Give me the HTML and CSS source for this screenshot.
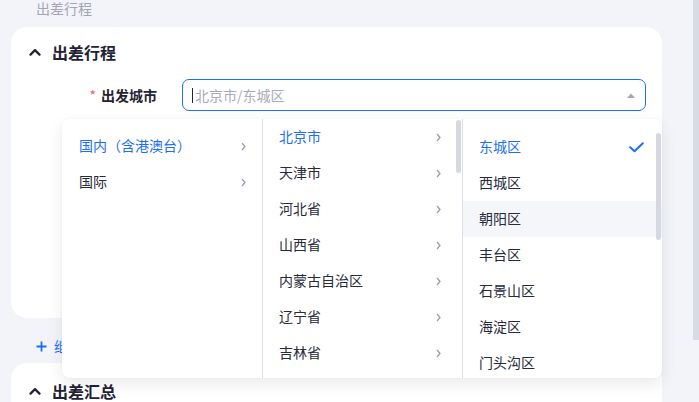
FILE: index.html
```html
<!DOCTYPE html>
<html lang="zh-CN">
<head>
  <meta charset="UTF-8">
  <meta name="viewport" content="width=device-width, initial-scale=1.0">
  <title>出差申请</title>
  <link rel="stylesheet" href="styles.css">
</head>
<body>

  <div class="page">
    <div class="section-title">出差行程</div>

    <!-- Trip card -->
    <div class="card">
      <div class="card-header">
        <svg class="collapse-icon" width="12" height="8" viewBox="0 0 12 8"><path d="M1.5 6.6L6 2.1l4.5 4.5" fill="none" stroke="#1f2333" stroke-width="2.2" stroke-linecap="round" stroke-linejoin="round"/></svg>
        <span>出差行程</span>
      </div>

      <div class="form-row">
        <label class="form-label"><span class="required">*</span>出发城市</label>
        <div class="field">
          <div class="select-input">
            <span class="text-cursor"></span>
            <span class="placeholder">北京市/东城区</span>
            <svg class="select-arrow" width="8" height="5" viewBox="0 0 8 5"><path d="M0 5L4 0.6 8 5z" fill="#a3a6b6"/></svg>
          </div>

          <!-- Cascader dropdown -->
          <div class="cascader">
            <div class="cascader-col">
              <div class="cascader-list">
                <div class="cascader-item active">国内（含港澳台）<svg class="chevron" width="5" height="9" viewBox="0 0 5 9"><path d="M1 1l3 3.5L1 8" fill="none" stroke="#9a9db0" stroke-width="1.3"/></svg></div>
                <div class="cascader-item">国际<svg class="chevron" width="5" height="9" viewBox="0 0 5 9"><path d="M1 1l3 3.5L1 8" fill="none" stroke="#9a9db0" stroke-width="1.3"/></svg></div>
              </div>
            </div>

            <div class="cascader-col cascader-col--provinces">
              <div class="cascader-list">
                <div class="cascader-item active">北京市<svg class="chevron" width="5" height="9" viewBox="0 0 5 9"><path d="M1 1l3 3.5L1 8" fill="none" stroke="#9a9db0" stroke-width="1.3"/></svg></div>
                <div class="cascader-item">天津市<svg class="chevron" width="5" height="9" viewBox="0 0 5 9"><path d="M1 1l3 3.5L1 8" fill="none" stroke="#9a9db0" stroke-width="1.3"/></svg></div>
                <div class="cascader-item">河北省<svg class="chevron" width="5" height="9" viewBox="0 0 5 9"><path d="M1 1l3 3.5L1 8" fill="none" stroke="#9a9db0" stroke-width="1.3"/></svg></div>
                <div class="cascader-item">山西省<svg class="chevron" width="5" height="9" viewBox="0 0 5 9"><path d="M1 1l3 3.5L1 8" fill="none" stroke="#9a9db0" stroke-width="1.3"/></svg></div>
                <div class="cascader-item">内蒙古自治区<svg class="chevron" width="5" height="9" viewBox="0 0 5 9"><path d="M1 1l3 3.5L1 8" fill="none" stroke="#9a9db0" stroke-width="1.3"/></svg></div>
                <div class="cascader-item">辽宁省<svg class="chevron" width="5" height="9" viewBox="0 0 5 9"><path d="M1 1l3 3.5L1 8" fill="none" stroke="#9a9db0" stroke-width="1.3"/></svg></div>
                <div class="cascader-item">吉林省<svg class="chevron" width="5" height="9" viewBox="0 0 5 9"><path d="M1 1l3 3.5L1 8" fill="none" stroke="#9a9db0" stroke-width="1.3"/></svg></div>
                <div class="cascader-item">黑龙江省<svg class="chevron" width="5" height="9" viewBox="0 0 5 9"><path d="M1 1l3 3.5L1 8" fill="none" stroke="#9a9db0" stroke-width="1.3"/></svg></div>
              </div>
              <div class="scroll-thumb"></div>
            </div>

            <div class="cascader-col cascader-col--districts">
              <div class="cascader-list">
                <div class="cascader-item active">东城区<svg class="check" width="15" height="11" viewBox="0 0 15 11"><path d="M1.2 5.2l4.3 4.1L13.8 1.2" fill="none" stroke="#1d6ff2" stroke-width="2" stroke-linecap="round" stroke-linejoin="round"/></svg></div>
                <div class="cascader-item">西城区</div>
                <div class="cascader-item hover">朝阳区</div>
                <div class="cascader-item">丰台区</div>
                <div class="cascader-item">石景山区</div>
                <div class="cascader-item">海淀区</div>
                <div class="cascader-item">门头沟区</div>
                <div class="cascader-item">房山区</div>
              </div>
              <div class="scroll-thumb"></div>
            </div>
          </div>
        </div>
      </div>
    </div>

    <div class="add-trip">
      <svg width="11" height="11" viewBox="0 0 11 11"><path d="M5.5 0.5v10M0.5 5.5h10" stroke="#1d6ff2" stroke-width="1.8"/></svg>
      <span>继续添加行程</span>
    </div>

    <!-- Summary card -->
    <div class="card card--summary">
      <div class="card-header">
        <svg class="collapse-icon" width="12" height="8" viewBox="0 0 12 8"><path d="M1.5 6.6L6 2.1l4.5 4.5" fill="none" stroke="#1f2333" stroke-width="2.2" stroke-linecap="round" stroke-linejoin="round"/></svg>
        <span>出差汇总</span>
      </div>
    </div>
  </div>

  <!-- Page scrollbar -->
  <div class="page-scrollbar"></div>

</body>
</html>
```

FILE: styles.css
```css
body {
  margin: 0;
  height: 402px;
  overflow: hidden;
  background-color: #f3f4f9;
  font-family: "Noto Sans CJK SC", "Noto Sans", sans-serif;
  color: #1f2333;
  position: relative;
}

.page {
  width: 651px;
  padding-left: 11px;
}

.section-title {
  height: 27px;
  line-height: 16px;
  padding-left: 25px;
  font-size: 14px;
  color: #a2a5b6;
}

.card {
  background-color: #fff;
  border-radius: 16px;
  height: 291px;
  padding: 16px 16px 0 0;
  box-sizing: border-box;
}

.card--summary {
  height: 80px;
  padding-top: 19px;
}

.card-header {
  display: flex;
  align-items: center;
  gap: 11px;
  height: 18px;
  padding-left: 18px;
  font-size: 16px;
  font-weight: bold;
  color: #1f2333;
}

.card-header span {
  line-height: 18px;
  margin-top: -1px;
}

/* Form row */
.form-row {
  display: flex;
  align-items: center;
  margin-top: 18px;
  gap: 25px;
}

.form-label {
  width: 146px;
  text-align: right;
  font-size: 14px;
  font-weight: bold;
  color: #1f2333;
  line-height: 20px;
  margin-top: -1px;
}

.required {
  color: #f25a55;
  font-weight: normal;
  margin-right: 5px;
}

.field {
  flex: 1;
  position: relative;
}

.select-input {
  height: 32px;
  box-sizing: border-box;
  border: 1px solid #1d6ff2;
  border-radius: 7px;
  display: flex;
  align-items: center;
  padding: 0 10px 0 9px;
}

.text-cursor {
  width: 1px;
  height: 15px;
  background-color: #1f2333;
  margin-right: 2px;
}

.placeholder {
  flex: 1;
  font-size: 14px;
  color: #a8abba;
  line-height: 20px;
  margin-top: -1px;
}

/* Cascader dropdown */
.cascader {
  position: absolute;
  top: 40px;
  left: -120px;
  width: 600px;
  height: 259px;
  background-color: #fff;
  border-radius: 8px;
  box-shadow: 0 6px 16px rgba(30, 35, 60, 0.09), 0 0 3px rgba(30, 35, 60, 0.04);
  display: flex;
  overflow: hidden;
  z-index: 2;
}

.cascader-col {
  flex: 1;
  position: relative;
  overflow: hidden;
  border-left: 1px solid #dcdee6;
}

.cascader-col:first-child {
  border-left-color: transparent;
}

.cascader-list {
  padding-top: 9px;
}

.cascader-col--provinces .cascader-list {
  margin-top: -9px;
}

.cascader-col--districts .cascader-list {
  padding-top: 10px;
}

.cascader-item {
  height: 36px;
  box-sizing: border-box;
  padding: 0 16px 2px;
  display: flex;
  align-items: center;
  justify-content: space-between;
  font-size: 14px;
  color: #262a39;
}

.cascader-item svg {
  margin-top: 2px;
}

.cascader-col--provinces .cascader-item {
  padding-right: 21px;
}

.cascader-col--districts .cascader-item {
  padding-right: 18px;
}

.cascader-item.active {
  color: #1d6ff2;
}

.cascader-item.hover {
  background-color: #f5f6f9;
}

.scroll-thumb {
  position: absolute;
  right: 1px;
  top: 1px;
  width: 5px;
  height: 53px;
  border-radius: 3px;
  background-color: #d6d8e1;
}

.cascader-col--districts .scroll-thumb {
  top: 14px;
  height: 107px;
}

/* Add trip link */
.add-trip {
  height: 45px;
  box-sizing: border-box;
  padding: 11px 0 0 25px;
  display: flex;
  align-items: center;
  gap: 7px;
  font-size: 14px;
  color: #1d6ff2;
}

.add-trip span {
  line-height: 18px;
}

.add-trip svg {
  margin-top: 1px;
}

.page-scrollbar {
  position: absolute;
  top: 0;
  right: 0;
  width: 6px;
  height: 340px;
  background-color: #d9dbe4;
}
```
